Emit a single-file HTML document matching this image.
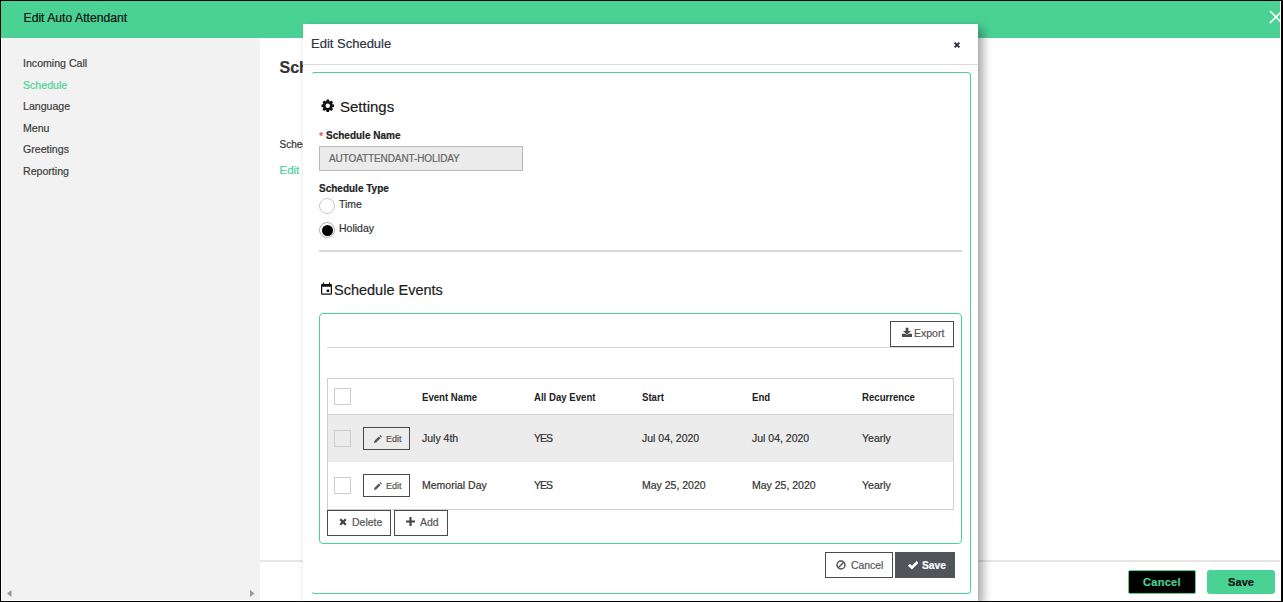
<!DOCTYPE html>
<html><head><meta charset="utf-8">
<style>
*{box-sizing:border-box;margin:0;padding:0}
html,body{width:1283px;height:602px;overflow:hidden;background:#000;font-family:"Liberation Sans",sans-serif;position:relative}
.a{position:absolute}
.t{position:absolute;white-space:nowrap;line-height:1;-webkit-text-stroke:.2px currentColor}
#page{position:absolute;left:1px;top:1px;width:1280px;height:600px;background:#fff}
#hdr{position:absolute;left:1px;top:1px;width:1279px;height:37px;background:#4ad295}
#side{position:absolute;left:2px;top:38px;width:258px;height:562px;background:#f2f2f2}
.nav{font-size:10.6px;color:#3d3d3d}
#modal{position:absolute;left:303px;top:24px;width:675px;height:577px;background:#fff;box-shadow:5px 4px 9px rgba(0,0,0,.35)}
.card{position:absolute;border:1px solid #4ad295;border-radius:4px}
.btn{position:absolute;border:1px solid #4a4a4a;background:#fff;color:#555}
.chk{position:absolute;width:17px;height:17px;border:1px solid #ccc;background:#fff}
.th{position:absolute;font-size:10.7px;font-weight:bold;color:#222;line-height:1;white-space:nowrap;transform:scaleX(.9);transform-origin:0 0}
.td{position:absolute;font-size:10.5px;color:#333;line-height:1;white-space:nowrap;-webkit-text-stroke:.2px currentColor}
</style></head><body>
<div id="page"></div>
<div id="hdr"></div>
<div class="t" style="left:23.5px;top:12px;font-size:12.2px;color:#111">Edit Auto Attendant</div>
<svg class="a" style="left:1269px;top:10px" width="14" height="14" viewBox="0 0 14 14"><path d="M1 1L13 13M13 1L1 13" stroke="#fff" stroke-width="1.6"/></svg>
<div id="side"></div>
<div class="t nav" style="left:23px;top:58px">Incoming Call</div>
<div class="t nav" style="left:23px;top:80px;color:#4ad295">Schedule</div>
<div class="t nav" style="left:23px;top:101px">Language</div>
<div class="t nav" style="left:23px;top:123px">Menu</div>
<div class="t nav" style="left:23px;top:144px">Greetings</div>
<div class="t nav" style="left:23px;top:166px">Reporting</div>
<svg class="a" style="left:7px;top:590px" width="6" height="8"><path d="M4.5 0L0 3.5L4.5 7Z" fill="#999"/></svg>
<svg class="a" style="left:250px;top:590px" width="6" height="8"><path d="M0 0L4.5 3.5L0 7Z" fill="#999"/></svg>
<div class="t" style="left:279.5px;top:59.5px;font-size:16px;font-weight:bold;color:#333">Schedule</div>
<div class="t" style="left:279.5px;top:139.5px;font-size:10px;color:#333">Schedule</div>
<div class="t" style="left:279.5px;top:165px;font-size:11.5px;color:#4ad295">Edit</div>
<div class="a" style="left:260px;top:560px;width:1020px;height:2px;background:#e6e6e6"></div>
<div class="a" style="left:1128px;top:570px;width:68px;height:24px;background:#000;border:1px solid #4ad295;border-radius:2px"></div>
<div class="t" style="left:1143px;top:577px;font-size:11px;font-weight:bold;color:#4ad295;letter-spacing:.3px">Cancel</div>
<div class="a" style="left:1207px;top:570px;width:68px;height:24px;background:#4ad295;border-radius:3px"></div>
<div class="t" style="left:1228px;top:577px;font-size:11px;font-weight:bold;color:#111;letter-spacing:.1px">Save</div>

<div id="modal"></div>
<div class="t" style="left:311px;top:37px;font-size:13px;color:#2f3542">Edit Schedule</div>
<svg class="a" style="left:953px;top:41px" width="8" height="8" viewBox="0 0 8 8"><path d="M1.6 1.6L6.4 6.4M6.4 1.6L1.6 6.4" stroke="#2a2e3a" stroke-width="1.9"/></svg>
<div class="a" style="left:303px;top:64px;width:675px;height:1px;background:#dcdcdc"></div>
<div class="card" style="left:311px;top:72px;width:660px;height:522px;border-left-color:transparent"></div>
<svg class="a" style="left:320.7px;top:98.8px" width="13.5" height="13.5" viewBox="0 0 14 14"><path fill="#111" fill-rule="evenodd" d="M5.33 2.29 L5.75 0.52 L8.25 0.52 L8.67 2.29 L9.15 2.49 L10.70 1.54 L12.46 3.30 L11.51 4.85 L11.71 5.33 L13.48 5.75 L13.48 8.25 L11.71 8.67 L11.51 9.15 L12.46 10.70 L10.70 12.46 L9.15 11.51 L8.67 11.71 L8.25 13.48 L5.75 13.48 L5.33 11.71 L4.85 11.51 L3.30 12.46 L1.54 10.70 L2.49 9.15 L2.29 8.67 L0.52 8.25 L0.52 5.75 L2.29 5.33 L2.49 4.85 L1.54 3.30 L3.30 1.54 L4.85 2.49Z M7 4.7A2.3 2.3 0 1 0 7 9.3A2.3 2.3 0 1 0 7 4.7Z"/></svg>
<div class="t" style="left:340px;top:99px;font-size:15px;color:#222">Settings</div>
<div class="t" style="left:319px;top:131px;font-size:11px;color:#d9534f">*</div>
<div class="t" style="left:326px;top:131px;font-size:10px;font-weight:bold;color:#222">Schedule Name</div>
<div class="a" style="left:319px;top:146px;width:204px;height:25px;background:#ebebeb;border:1px solid #b8b8b8"></div>
<div class="t" style="left:329px;top:154px;font-size:10px;color:#666;letter-spacing:-.1px">AUTOATTENDANT-HOLIDAY</div>
<div class="t" style="left:319px;top:184px;font-size:10px;font-weight:bold;color:#222">Schedule Type</div>
<div class="a" style="left:319px;top:198px;width:16px;height:16px;border:1px solid #c8c8c8;border-radius:50%;background:#fff"></div>
<div class="t" style="left:339px;top:199px;font-size:10.5px;color:#333">Time</div>
<div class="a" style="left:319px;top:222px;width:16px;height:16px;border:1px solid #b0b0b0;border-radius:50%;background:#fff"></div>
<div class="a" style="left:321.5px;top:224.5px;width:11px;height:11px;border-radius:50%;background:#000"></div>
<div class="t" style="left:339px;top:223px;font-size:10.5px;color:#333">Holiday</div>
<div class="a" style="left:319px;top:250px;width:643px;height:2px;background:#d9d9d9"></div>
<svg class="a" style="left:321px;top:282px" width="11" height="13" viewBox="0 0 11 13"><path fill="#111" fill-rule="evenodd" d="M1.9 .5h1.2v1.5h-1.2z M7.9 .5h1.2v1.5h-1.2z M1.2 2h8.6a1.2 1.2 0 0 1 1.2 1.2v8.4a1.2 1.2 0 0 1-1.2 1.2h-8.6a1.2 1.2 0 0 1-1.2-1.2v-8.4a1.2 1.2 0 0 1 1.2-1.2z M1.2 4.8v6.7h8.6v-6.7z M5.6 7.6h2.6v2.4h-2.6z"/></svg>
<div class="t" style="left:334px;top:282.5px;font-size:14.5px;color:#222">Schedule Events</div>
<div class="card" style="left:319px;top:313px;width:643px;height:231px"></div>
<div class="btn" style="left:890px;top:321px;width:64px;height:26px"></div>
<svg class="a" style="left:902px;top:327px" width="10" height="10" viewBox="0 0 10 10"><path d="M3.6 .8h2.8v3.2h2.6l-4 3.6l-4-3.6h2.6z M0 6.8h3.4l1.6 1.3l1.6-1.3h3.4v3.2h-10z" fill="#4a4a4a"/></svg>
<div class="t" style="left:914px;top:327.5px;font-size:10.5px;color:#555">Export</div>
<div class="a" style="left:327px;top:347px;width:627px;height:1px;background:#d6d6d6"></div>
<div class="a" style="left:327px;top:378px;width:627px;height:132px;border:1px solid #cfcfcf"></div>
<div class="a" style="left:328px;top:414px;width:625px;height:1px;background:#d0d0d0"></div>
<div class="a" style="left:328px;top:415px;width:625px;height:47px;background:#ececec"></div>
<div class="chk" style="left:334px;top:388px"></div>
<div class="th" style="left:422px;top:392px">Event Name</div>
<div class="th" style="left:534px;top:392px">All Day Event</div>
<div class="th" style="left:642px;top:392px">Start</div>
<div class="th" style="left:752px;top:392px">End</div>
<div class="th" style="left:862px;top:392px">Recurrence</div>
<div class="chk" style="left:334px;top:430px;background:#ececec"></div>
<div class="btn" style="left:363px;top:427px;width:47px;height:23px;background:#ececec"></div>
<svg class="a" style="left:374px;top:434.6px" width="8" height="8" viewBox="0 0 8 8"><path d="M0 8l.5-2.2l4.4-4.4l1.7 1.7l-4.4 4.4z M5.5.8l.8-.8l1.7 1.7l-.8.8z" fill="#555"/></svg>
<div class="t" style="left:386px;top:434.5px;font-size:9px;color:#555">Edit</div>
<div class="td" style="left:422px;top:433px">July 4th</div>
<div class="td" style="left:534px;top:433px;letter-spacing:-1px">YES</div>
<div class="td" style="left:642px;top:433px">Jul 04, 2020</div>
<div class="td" style="left:752px;top:433px">Jul 04, 2020</div>
<div class="td" style="left:862px;top:433px">Yearly</div>
<div class="chk" style="left:334px;top:477px"></div>
<div class="btn" style="left:363px;top:474px;width:47px;height:23px"></div>
<svg class="a" style="left:374px;top:481.6px" width="8" height="8" viewBox="0 0 8 8"><path d="M0 8l.5-2.2l4.4-4.4l1.7 1.7l-4.4 4.4z M5.5.8l.8-.8l1.7 1.7l-.8.8z" fill="#555"/></svg>
<div class="t" style="left:386px;top:481.5px;font-size:9px;color:#555">Edit</div>
<div class="td" style="left:422px;top:480px">Memorial Day</div>
<div class="td" style="left:534px;top:480px;letter-spacing:-1px">YES</div>
<div class="td" style="left:642px;top:480px">May 25, 2020</div>
<div class="td" style="left:752px;top:480px">May 25, 2020</div>
<div class="td" style="left:862px;top:480px">Yearly</div>
<div class="btn" style="left:327px;top:510px;width:64px;height:26px"></div>
<svg class="a" style="left:339.3px;top:518.4px" width="8" height="8" viewBox="0 0 8 8"><path d="M1.2 1.2L6.8 6.8M6.8 1.2L1.2 6.8" stroke="#444" stroke-width="2.3"/></svg>
<div class="t" style="left:352px;top:516.5px;font-size:10.5px;color:#555">Delete</div>
<div class="btn" style="left:394px;top:510px;width:54px;height:26px"></div>
<svg class="a" style="left:406px;top:517.4px" width="9" height="9" viewBox="0 0 9 9"><path d="M3.4 0h2.2v3.4h3.4v2.2h-3.4v3.4h-2.2v-3.4h-3.4v-2.2h3.4z" fill="#444"/></svg>
<div class="t" style="left:420px;top:516.5px;font-size:10.5px;color:#555">Add</div>
<div class="btn" style="left:825px;top:552px;width:68px;height:26px"></div>
<svg class="a" style="left:836px;top:560px" width="10" height="10" viewBox="0 0 10 10"><circle cx="5" cy="5" r="4" fill="none" stroke="#555" stroke-width="1.5"/><path d="M2.3 7.7L7.7 2.3" stroke="#555" stroke-width="1.5"/></svg>
<div class="t" style="left:851px;top:560.5px;font-size:10.4px;color:#555">Cancel</div>
<div class="a" style="left:895px;top:552px;width:60px;height:26px;background:#515458"></div>
<svg class="a" style="left:907.7px;top:561px" width="10.5" height="8.5" viewBox="0 0 10.5 8.5"><path d="M0 4.7L1.9 2.8L3.9 4.8L8.6 .1L10.5 2L3.9 8.6Z" fill="#fff"/></svg>
<div class="t" style="left:922px;top:560.5px;font-size:10.2px;font-weight:bold;color:#fff">Save</div>
<div class="a" style="left:0;top:0;width:1283px;height:602px;border-style:solid;border-color:#000;border-width:1px 2px 1px 1px"></div>
</body></html>
